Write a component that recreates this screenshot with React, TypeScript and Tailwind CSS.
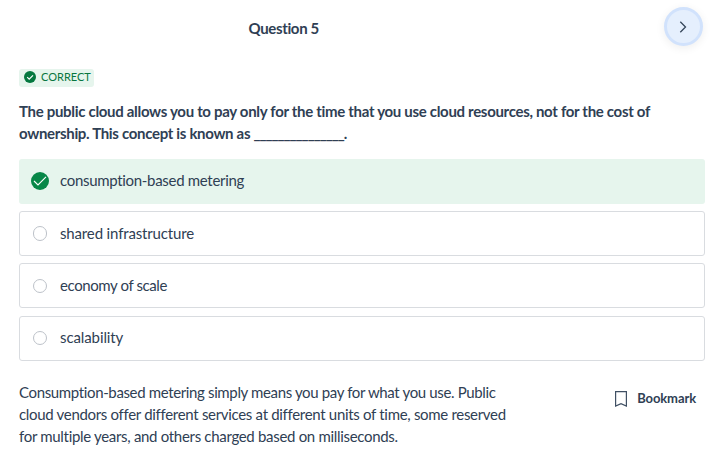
import React from "react";

const options = [
  { label: "shared infrastructure", row: "mt-[7px]", radio: "h-[15px]", text: "-mt-[2px] tracking-[-0.15px]" },
  { label: "economy of scale", row: "mt-[7px]", radio: "mt-px h-[14px]", text: "-mt-[2px] tracking-[-0.4px]" },
  { label: "scalability", row: "mt-[8px]", radio: "-mt-px h-[14px]", text: "-mt-[4px] tracking-[-0.1px]" },
];

export default function App() {
  return (
    <main className="h-[459px] w-[719px] overflow-hidden bg-white pl-[19px] pr-[14px] font-['Lato',sans-serif] text-[15px] leading-[22px] text-[#2f4054] [font-variant-ligatures:none]">
      <header className="flex h-[68px] items-start justify-between">
        <h1 className="ml-[229.5px] mt-[17px] text-[15px] font-bold tracking-[-0.35px]">Question 5</h1>
        <button aria-label="Next question" className="mr-[2px] mt-[7px] flex size-[39px] items-center justify-center rounded-full border-[3px] border-[#d1e2fc] bg-[#e5effd] shadow-[0_2px_10px_rgba(0,0,0,0.07)]">
          <svg className="mr-px" width="8" height="12" viewBox="0 0 8 12" fill="none" stroke="#35465a" strokeWidth="1.3"><path d="M1.3 0.8 6.5 6l-5.2 5.2" /></svg>
        </button>
      </header>
      <div className="mt-px flex h-[18px] w-[75px] items-center rounded-[3px] bg-[#e6f5ed] pl-[5px] text-[11px] text-[#08763f]">
        <svg className="-mt-[2px] mr-[5px]" width="12" height="12" viewBox="0 0 12 12"><circle cx="6" cy="6" r="6" fill="#04783f" /><path d="m3.2 6.1 2 2 3.8-3.8" fill="none" stroke="white" strokeWidth="1.2" /></svg>
        <span className="-mt-[2px]">CORRECT</span>
      </div>
      <h2 className="mt-[13px] whitespace-nowrap text-[15px] font-bold leading-[22px]">
        <span className="block tracking-[-0.31px]">The public cloud allows you to pay only for the time that you use cloud resources, not for the cost of</span>
        <span className="block tracking-[-0.32px]">ownership. This concept is known as <span className="tracking-[-0.98px]">_______________</span>.</span>
      </h2>
      <div className="mt-[15px] flex flex-col">
        <div className="flex h-[45px] items-center rounded-[3px] bg-[#e6f5ed] pl-[12px] tracking-[-0.31px]">
          <svg className="-mt-px mr-[11px]" width="18" height="18" viewBox="0 0 18 18"><circle cx="9" cy="9" r="9" fill="#078748" /><path d="m3 9 4 4 8-8.2" fill="none" stroke="white" strokeWidth="1.1" /></svg>
          <span className="-mt-[3px]">consumption-based metering</span>
        </div>
        {options.map(({ label, row, radio, text }) => (
          <div key={label} className={`flex h-[45px] items-center rounded-[3px] border border-[#d9dce0] pl-[13px] ${row}`}>
            <span className={`mr-[13px] w-[14px] rounded-full border border-[#bdc2c9] ${radio}`} />
            <span className={text}>{label}</span>
          </div>
        ))}
      </div>
      <footer className="mt-[20px] flex justify-between">
        <p className="whitespace-nowrap">
          <span className="block tracking-[-0.36px]">Consumption-based metering simply means you pay for what you use. Public</span>
          <span className="block tracking-[-0.31px]">cloud vendors offer different services at different units of time, some reserved</span>
          <span className="block tracking-[-0.31px]">for multiple years, and others charged based on milliseconds.</span>
        </p>
        <button className="mr-[9px] mt-[6px] flex h-[22px] items-center gap-[10px] text-[13px] font-bold tracking-[-0.1px]">
          <svg className="mt-px" width="12" height="16" viewBox="0 0 12 16" fill="none" stroke="#405064" strokeWidth="1.2"><path d="M.6.6h10.8v14.4L6 12.6.6 15Z" /></svg>
          Bookmark
        </button>
      </footer>
    </main>
  );
}
